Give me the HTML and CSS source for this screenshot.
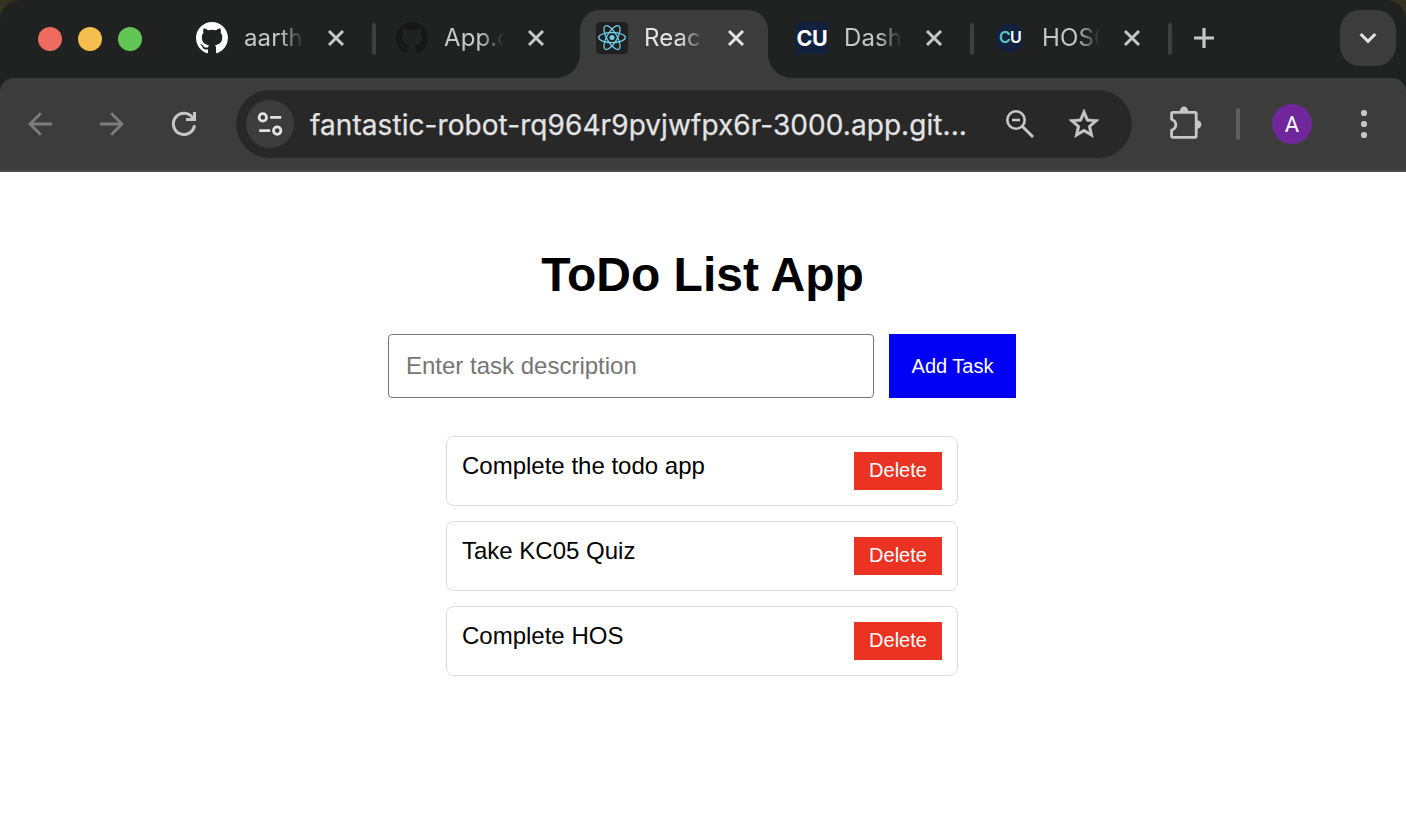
FILE: index.html
```html
<!DOCTYPE html>
<html lang="en">
<head>
<meta charset="utf-8">
<title>ToDo List App</title>
<link rel="stylesheet" href="styles.css">
</head>
<body>
<svg class="defs" width="0" height="0" aria-hidden="true">
  <symbol id="github" viewBox="0 0 16 16"><path fill="currentColor" d="M8 0C3.58 0 0 3.58 0 8c0 3.54 2.29 6.53 5.47 7.59.4.07.55-.17.55-.38 0-.19-.01-.82-.01-1.49-2.01.37-2.53-.49-2.69-.94-.09-.23-.48-.94-.82-1.13-.28-.15-.68-.52-.01-.53.63-.01 1.08.58 1.23.82.72 1.21 1.87.87 2.33.66.07-.52.28-.87.51-1.07-1.78-.2-3.64-.89-3.64-3.95 0-.87.31-1.59.82-2.15-.08-.2-.36-1.02.08-2.12 0 0 .67-.21 2.2.82.64-.18 1.32-.27 2-.27s1.36.09 2 .27c1.53-1.04 2.2-.82 2.2-.82.44 1.1.16 1.92.08 2.12.51.56.82 1.27.82 2.15 0 3.07-1.87 3.75-3.65 3.95.29.25.54.73.54 1.48 0 1.07-.01 1.93-.01 2.2 0 .21.15.46.55.38A8.01 8.01 0 0 0 16 8c0-4.42-3.58-8-8-8z"/></symbol>
  <symbol id="close" viewBox="0 0 24 24"><path d="M5 5l14 14M19 5L5 19" fill="none" stroke="currentColor" stroke-width="3"/></symbol>
</svg>
<div class="desktop">
<div class="browser">
  <div class="tabstrip">
    <div class="lights"><i class="red"></i><i class="yellow"></i><i class="green"></i></div>
    <div class="tab divided">
      <svg class="favicon white"><use href="#github"/></svg><span class="title">aarth</span><svg class="close"><use href="#close"/></svg>
    </div>
    <div class="tab">
      <svg class="favicon dim"><use href="#github"/></svg><span class="title">App.c</span><svg class="close"><use href="#close"/></svg>
    </div>
    <div class="tab active">
      <svg class="favicon" viewBox="0 0 32 32"><rect width="32" height="32" rx="4" fill="#202020"/><g transform="translate(16 15.6)" fill="none" stroke="#6fd0ec" stroke-width="1.25"><ellipse rx="13.4" ry="5.1"/><ellipse rx="13.4" ry="5.1" transform="rotate(60)"/><ellipse rx="13.4" ry="5.1" transform="rotate(120)"/><circle r="2.5" fill="#6fd0ec" stroke="none"/></g></svg><span class="title">React</span><svg class="close"><use href="#close"/></svg>
    </div>
    <div class="tab narrow divided">
      <span class="favicon cu-square">CU</span><span class="title">Dash</span><svg class="close"><use href="#close"/></svg>
    </div>
    <div class="tab narrow divided">
      <span class="favicon cu-round"><b>C</b>U</span><span class="title">HOS0</span><svg class="close"><use href="#close"/></svg>
    </div>
    <svg class="plus" viewBox="0 0 24 24"><path d="M12 2v20M2 12h20" fill="none" stroke="#c7c7c7" stroke-width="3.2"/></svg>
    <div class="tab-search"><svg width="20" height="14" viewBox="0 0 20 14"><path d="M2.7 3l7.3 7.3L17.3 3" fill="none" stroke="#e3e3e3" stroke-width="3"/></svg></div>
  </div>

  <div class="toolbar">
    <svg class="nav" viewBox="0 0 32 32"><path d="M28 16H5.8M16.8 5.2L6 16l10.8 10.8" fill="none" stroke="#7c7c7c" stroke-width="2.8"/></svg>
    <svg class="nav forward" viewBox="0 0 32 32"><path d="M4 16h22.2M15.2 5.2L26 16 15.2 26.8" fill="none" stroke="#7c7c7c" stroke-width="2.8"/></svg>
    <svg class="nav reload" viewBox="0 0 32 32"><path d="M26.500 17.300A10.600 10.600 0 1 1 24.800 10M26.500 4v7.500H18" fill="none" stroke="#c7c7c7" stroke-width="3"/></svg>
    <div class="omnibox">
      <div class="site-info"><svg width="28" height="28" viewBox="0 0 28 28" fill="none" stroke="#e3e3e3" stroke-width="2.8"><circle cx="6.8" cy="7.4" r="3.7"/><path d="M14.2 7.400h11M3.200 20.600h11"/><circle cx="21.200" cy="20.600" r="3.700"/></svg></div>
      <span class="url">fantastic-robot-rq964r9pvjwfpx6r-3000.app.git...</span>
      <svg class="zoom-icon" viewBox="0 0 32 32" fill="none" stroke="#c7c7c7"><circle cx="12" cy="12" r="8.700" stroke-width="2.600"/><path d="M18.200 18.200L29 29" stroke-width="3"/><path d="M8 12h8" stroke-width="2.600"/></svg>
      <svg class="star" viewBox="0 0 24 24"><path fill="#c7c7c7" stroke="#c7c7c7" stroke-width=".4" d="M22 9.24l-7.19-.62L12 2 9.19 8.63 2 9.24l5.46 4.73L5.82 21 12 17.27 18.18 21l-1.63-7.03L22 9.24zM12 15.4l-3.76 2.27 1-4.28-3.32-2.88 4.38-.38L12 6.1l1.71 4.04 4.38.38-3.32 2.88 1 4.28L12 15.4z"/></svg>
    </div>
    <svg class="puzzle" viewBox="0 0 36 36"><path d="M6.500 6h22a1.300 1.300 0 0 1 1.300 1.300V29.700a1.300 1.300 0 0 1-1.300 1.300H6.500a1.300 1.300 0 0 1-1.300-1.300V24C7.600 23 9.400 21 9.400 18.500S7.600 14 5.200 13V7.300A1.300 1.300 0 0 1 6.500 6z" transform="translate(.4 .3)" fill="none" stroke="#c7c7c7" stroke-width="2.800"/><path d="M13.800 5.500a4.200 5 0 0 1 8.400 0zM31 14.300a4.400 4.200 0 0 1 0 8.400z" fill="#c7c7c7"/></svg>
    <i class="divider"></i>
    <span class="avatar">A</span>
    <svg class="dots" viewBox="0 0 8 32" fill="#c7c7c7"><circle cx="4" cy="5" r="3.100"/><circle cx="4" cy="16" r="3.100"/><circle cx="4" cy="27" r="3.100"/></svg>
  </div>

  <main class="page">
    <h1>ToDo List App</h1>
    <div class="entry">
      <input class="task-input" type="text" placeholder="Enter task description">
      <button class="add">Add Task</button>
    </div>
    <ul class="tasks">
      <li>Complete the todo app<button class="delete">Delete</button></li>
      <li>Take KC05 Quiz<button class="delete">Delete</button></li>
      <li>Complete HOS<button class="delete">Delete</button></li>
    </ul>
  </main>
</div>
</div>
</body>
</html>
```
FILE: styles.css
```css
* { box-sizing: border-box; }
body { margin: 0; background: #fff; font-family: "Liberation Sans", Arial, sans-serif; overflow: hidden; }
.defs { display: block; height: 0; }
.desktop { background: #35321f; }
.browser { width: 1406px; height: 824px; background: #202221; border-radius: 20px 20px 0 0; overflow: hidden; }

.tabstrip { display: flex; height: 78px; padding-left: 38px; font-family: Inter, sans-serif; }
.lights { display: flex; gap: 16px; width: 142px; padding-top: 27px; }
.lights i { width: 24px; height: 24px; border-radius: 50%; }
.red { background: #ed6b60; }
.yellow { background: #f5bf4f; }
.green { background: #62c656; }

.tab { display: flex; align-items: center; flex: none; position: relative; width: 200px; height: 68px; margin-top: 10px; padding: 0 0 12px 16px; color: #c7c7c7; }
.tab.narrow { width: 198px; }
.favicon { display: block; flex: none; width: 32px; height: 32px; margin-right: 16px; }
.white { color: #fff; }
.dim { color: #181717; }
.title { flex: none; width: 60px; margin-right: 20px; overflow: hidden; white-space: nowrap; font-size: 24px; font-weight: 400; line-height: 36px; letter-spacing: 0.1px; -webkit-mask-image: linear-gradient(90deg, #000 60%, transparent); mask-image: linear-gradient(90deg, #000 60%, transparent); }
.narrow .title { width: 58px; }
.close { flex: none; width: 24px; height: 24px; }
.divided::after { content: ""; position: absolute; right: 4px; top: 13px; width: 4px; height: 32px; border-radius: 2px; background: #3f3f3f; }
.active { width: 188px; margin-right: 12px; background: #3c3c3c; border-radius: 20px 20px 0 0; color: #e3e3e3; }
.active::before, .active::after { content: ""; position: absolute; bottom: 0; width: 24px; height: 24px; }
.active::before { left: -24px; background: radial-gradient(circle at 0 0, transparent 23.5px, #3c3c3c 24.5px); }
.active::after { right: -24px; background: radial-gradient(circle at 100% 0, transparent 23.5px, #3c3c3c 24.5px); }
.cu-square { background: #12213f; color: #fff; font: 700 21.5px/32px Inter, sans-serif; text-align: center; letter-spacing: -0.3px; }
.cu-round { background: radial-gradient(circle, #12213f 14px, transparent 14.7px); color: #fff; font: 600 16px/31px Inter, sans-serif; text-align: center; letter-spacing: -0.8px; }
.cu-round b { color: #5fc4bd; font-weight: 600; }
.plus { width: 24px; height: 24px; margin: 26px 0 0 16px; }
.tab-search { display: flex; align-items: center; justify-content: center; width: 56px; height: 56px; margin: 10px 10px 0 auto; border-radius: 20px; background: #3c3c3c; }

.toolbar { display: flex; align-items: center; height: 94px; padding-left: 24px; background: #3c3c3c; border-bottom: 2px solid #4a4a4a; border-radius: 14px 14px 0 0; }
.nav { width: 32px; height: 32px; }
.forward, .reload { margin-left: 40px; }
.omnibox { display: flex; align-items: center; width: 896px; height: 68px; margin-left: 36px; padding-left: 10px; border-radius: 34px; background: #282828; }
.site-info { display: flex; align-items: center; justify-content: center; width: 48px; height: 48px; border-radius: 50%; background: #3c3c3c; }
.url { width: 680px; margin-left: 16px; padding-top: 1px; white-space: nowrap; color: #e3e3e3; font: 400 28px/40px Inter, sans-serif; letter-spacing: 0.07px; -webkit-text-stroke: 0.25px #e3e3e3; }
.zoom-icon { width: 32px; height: 32px; margin-left: 14px; }
.star { width: 36px; height: 36px; margin-left: 30px; }
.puzzle { width: 36px; height: 36px; margin-left: 34px; }
.divider { width: 4px; height: 32px; margin-left: 34px; border-radius: 2px; background: #5e5e5e; }
.avatar { width: 40px; height: 40px; margin-left: 32px; border-radius: 50%; background: #71279c; color: #fff; font: 22px/42px Roboto, sans-serif; text-align: center; }
.dots { width: 8px; height: 32px; margin-left: 48px; }

.page { height: 652px; padding-top: 75px; background: #fff; color: #000; }
h1 { margin: 0; font-size: 48px; line-height: 55px; text-align: center; padding-right: 1px; }
.entry { display: flex; gap: 15px; width: 628px; margin: 32px 0 0 388px; }
.task-input { width: 486px; height: 64px; padding: 0 17px; border: 1px solid #767676; border-radius: 4px; background: #fff; font: 24px "Liberation Sans", Arial, sans-serif; }
.task-input::placeholder { color: #757575; }
.add, .delete { border: 0; padding: 0; color: #fff; font: 20px "Liberation Sans", Arial, sans-serif; }
.add { width: 127px; height: 64px; background: #0000f5; }
.tasks { display: grid; gap: 15px; width: 512px; margin: 38px 0 0 446px; padding: 0; list-style: none; }
.tasks li { display: flex; align-items: flex-start; justify-content: space-between; height: 70px; padding: 15px; border: 1px solid #ddd; border-radius: 8px; font-size: 24px; line-height: 28px; }
.delete { width: 88px; height: 38px; padding-bottom: 2px; background: #ea3323; }
```
